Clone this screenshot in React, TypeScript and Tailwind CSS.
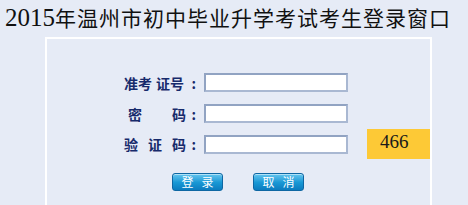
import React from "react";

const cjk = '"Noto Sans CJK SC", "Noto Sans", sans-serif';

function Field() {
  return (
    <div className="w-[144px] h-[19px] bg-white border-2 border-[#a9b8d2] border-t-[#91a3c2] border-l-[#91a3c2]" />
  );
}

function Btn({ children }: { children: React.ReactNode }) {
  return (
    <button
      type="button"
      className="w-[51px] h-[18px] rounded-[3px] border border-[#0e67a3] bg-gradient-to-b from-[#62c6f0] via-[#1a9ad6] to-[#0b7cbf] text-white text-[12px] leading-[16px] tracking-[8px] pl-[8px] shadow-[inset_0_1px_0_rgba(255,255,255,0.5)]"
    >
      {children}
    </button>
  );
}

const label = "ml-[77px] w-[72px] flex text-[14px] font-bold text-[#172a6b] leading-none";

export default function App() {
  return (
    <div
      className="w-[468px] h-[205px] overflow-hidden bg-[#e6ebf6]"
      style={{ fontFamily: cjk }}
    >
      <div className="h-[37px] pl-[5px] pt-[2px]">
        <h1 className="w-max text-[21px] leading-[30px] tracking-[1px] text-[#111] whitespace-nowrap">
          <span className="text-[25px] tracking-normal" style={{ fontFamily: '"Liberation Serif", serif' }}>
            2015
          </span>
          年温州市初中毕业升学考试考生登录窗口
        </h1>
      </div>

      <div className="ml-[45px] w-[387px] h-[170px] border-2 border-b-0 border-white">
        {/* row 1 */}
        <div className="mt-[34px] h-[19px] flex items-center">
          <div className={label}>
            <span>准考</span>
            <span className="ml-[4px]">证号</span>
            <span className="ml-auto">:</span>
          </div>
          <div className="ml-[8px]">
            <Field />
          </div>
        </div>

        {/* row 2 */}
        <div className="mt-[12px] h-[19px] flex items-center">
          <div className={label}>
            <span className="ml-[4px]">密</span>
            <span className="ml-[30px]">码</span>
            <span className="ml-auto">:</span>
          </div>
          <div className="ml-[8px]">
            <Field />
          </div>
        </div>

        {/* row 3 */}
        <div className="mt-[6px] h-[30px] flex items-center">
          <div className={label}>
            <span>验</span>
            <span className="ml-[10px]">证</span>
            <span className="ml-[10px]">码</span>
            <span className="ml-auto">:</span>
          </div>
          <div className="ml-[8px]">
            <Field />
          </div>
          <div
            className="ml-[19px] w-[63px] h-[30px] bg-[#fdc936] text-[19px] text-[#1a1a1a] leading-[26px] pl-[13px]"
            style={{ fontFamily: '"Liberation Serif", serif' }}
          >
            466
          </div>
        </div>

        {/* buttons */}
        <div className="mt-[14px] ml-[125px] flex gap-[30px]">
          <Btn>登录</Btn>
          <Btn>取消</Btn>
        </div>
      </div>
    </div>
  );
}
